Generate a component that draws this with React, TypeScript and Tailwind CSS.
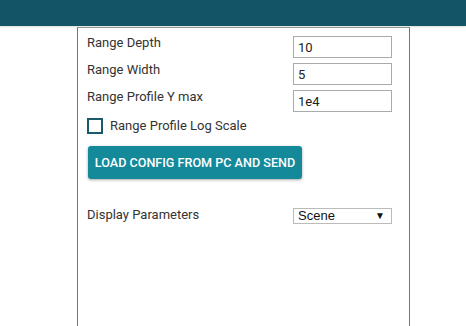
import React from 'react';

const rows = [
  { label: 'Range Depth', value: '10' },
  { label: 'Range Width', value: '5' },
  { label: 'Range Profile Y max', value: '1e4' },
];

export default function App() {
  return (
    <div className="h-[326px] w-[466px] overflow-hidden bg-white font-['Roboto',sans-serif] text-[13px] leading-[16px] text-[#333]">
      <div className="h-[26px] bg-[#135566] shadow-[0_1px_2px_rgba(0,0,0,0.15)]" />
      <div className="ml-[77px] mt-[1px] h-[299px] w-[333px] border-x border-t border-x-[#777] border-t-[#999] pl-[9px] pt-[8px]">
        <div className="flex flex-col gap-[5px]">
          {rows.map((r) => (
            <div key={r.label} className="flex items-start">
              <div className="w-[206px] leading-[14px]">{r.label}</div>
              <input
                defaultValue={r.value}
                className="h-[22px] w-[99px] border border-[#aaa] px-[4px] text-[13px] text-[#222] outline-none"
              />
            </div>
          ))}
        </div>

        <label className="mt-[6px] flex h-[16px] items-center gap-[7px]">
          <span className="h-[16px] w-[16px] border-2 border-[#1b5a69]" />
          <span>Range Profile Log Scale</span>
        </label>

        <button className="mt-[12px] ml-[1px] flex h-[33px] w-[214px] items-center justify-center rounded-[3px] bg-[#13899a] text-[12.6px] font-medium text-white shadow-[0_1px_3px_rgba(0,0,0,0.35)]">
          LOAD CONFIG FROM PC AND SEND
        </button>

        <div className="mt-[29px] flex items-start">
          <div className="w-[206px] leading-[14px]">Display Parameters</div>
          <div className="flex h-[16px] w-[99px] items-center justify-between border border-[#bbb] pl-[4px] pr-[6px] font-['Liberation_Sans',sans-serif] text-[13px] text-[#111]">
            <span>Scene</span>
            <span className="text-[10px]">▼</span>
          </div>
        </div>
      </div>
    </div>
  );
}
